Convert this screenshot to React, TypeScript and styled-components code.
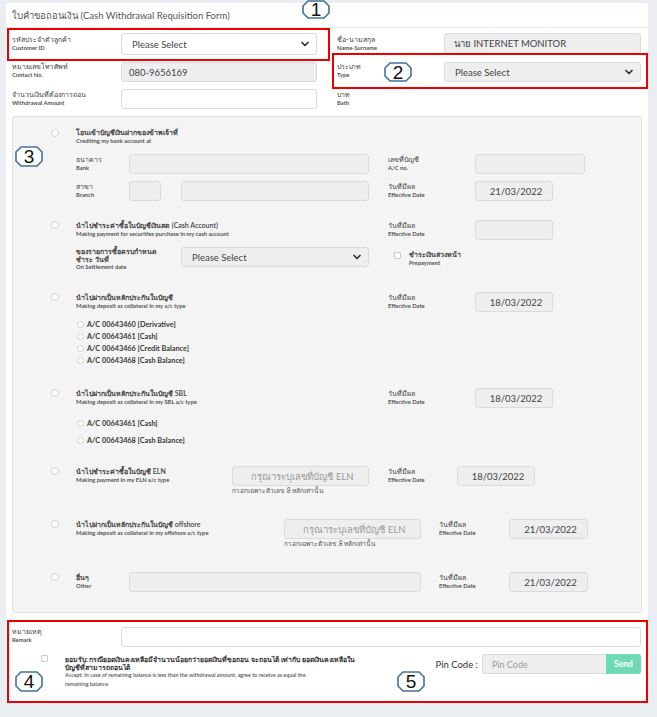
import React from 'react';
import styled, { createGlobalStyle } from 'styled-components';
import { ChevronDown } from 'lucide-react';

// Global page styles
const GlobalStyle = createGlobalStyle`
  html, body {
    margin: 0;
    padding: 0;
    background: #eaedf1;
  }
  body {
    font-family: "Lato", "Noto Sans", sans-serif;
    color: #444;
  }
  * {
    box-sizing: border-box;
  }
`;

const Page = styled.div`
  position: relative;
  width: 657px;
  height: 717px;
  padding: 3px 9px 0 6px;
  overflow: hidden;
`;

const Card = styled.div`
  background: #fff;
  border-radius: 3px;
`;

const CardHeader = styled.div`
  height: 25px;
  padding: 0 6px;
  display: flex;
  align-items: center;
  border-bottom: 1px solid #eceef1;
  font-size: 9.5px;
  color: #555;
`;

// Top customer info grid
const TopGrid = styled.div`
  display: grid;
  grid-template-columns: 109px 196px 20px 107px 197px;
  grid-auto-rows: auto;
  row-gap: 7px;
  padding: 5px 0 0 6px;
  align-items: start;
`;

const Lbl = styled.div<{ $w?: number; $pt?: number }>`
  width: ${p => (p.$w ? `${p.$w}px` : 'auto')};
  flex: none;
  padding-top: ${p => p.$pt ?? 1}px;
`;

const Th = styled.div<{ $bold?: boolean; $lh?: number }>`
  font-size: 7px;
  line-height: ${p => p.$lh ?? 9}px;
  color: #444;
  font-weight: ${p => (p.$bold ? 600 : 400)};
  white-space: nowrap;
`;

const En = styled.div`
  font-size: 5.8px;
  line-height: 8px;
  color: #555;
  font-weight: 700;
  white-space: nowrap;
`;

const Field = styled.div<{ $w?: number; $h?: number; $gray?: boolean; $center?: boolean; $pl?: number }>`
  width: ${p => (p.$w ? `${p.$w}px` : '100%')};
  height: ${p => p.$h ?? 20}px;
  flex: none;
  border: 1px solid #d9dbde;
  border-radius: 3px;
  background: ${p => (p.$gray ? '#eeeeee' : '#fff')};
  display: flex;
  align-items: center;
  justify-content: ${p => (p.$center ? 'center' : 'space-between')};
  padding: 0 5px 0 ${p => p.$pl ?? 9}px;
  font-size: 9.5px;
  color: #444;
  white-space: nowrap;
`;

const Placeholder = styled.span`
  color: #9a9a9a;
  font-size: 9.5px;
`;

const Chevron = styled(ChevronDown)`
  flex: none;
  color: #333;
`;

// Gray option panel
const Panel = styled.div`
  margin: 7px 6px 0 6px;
  background: #f4f4f4;
  border: 1px solid #e3e3e3;
  border-radius: 3px;
  padding: 11px 0 20px 0;
`;

const Block = styled.div<{ $mt?: number }>`
  display: flex;
  margin-top: ${p => p.$mt ?? 0}px;
`;

const RadioCell = styled.div`
  width: 63px;
  flex: none;
  padding: 1px 0 0 38px;
`;

const Radio = styled.span<{ $size?: number }>`
  display: block;
  flex: none;
  width: ${p => p.$size ?? 8}px;
  height: ${p => p.$size ?? 8}px;
  border-radius: 50%;
  border: 1px solid #d3d3d3;
  background: #fff;
`;

const Body = styled.div`
  flex: 1;
  display: flex;
  flex-direction: column;
`;

const Row = styled.div<{ $mt?: number; $h?: number }>`
  display: flex;
  align-items: flex-start;
  margin-top: ${p => p.$mt ?? 0}px;
  min-height: ${p => p.$h ?? 0}px;
`;

const Gap = styled.div<{ $w: number }>`
  width: ${p => p.$w}px;
  flex: none;
`;

const SubList = styled.div<{ $mt: number; $gap: number }>`
  display: flex;
  flex-direction: column;
  gap: ${p => p.$gap}px;
  margin-top: ${p => p.$mt}px;
  margin-left: 1px;
`;

const SubItem = styled.div`
  display: flex;
  align-items: center;
  gap: 3px;
  height: 12px;
  font-size: 7.3px;
  font-weight: 700;
  color: #3a3a3a;
`;

const FieldStack = styled.div`
  display: flex;
  flex-direction: column;
`;

const Hint = styled.div`
  font-size: 6.6px;
  line-height: 9px;
  color: #555;
  white-space: nowrap;
`;

const Check = styled.span<{ $mt?: number }>`
  display: block;
  flex: none;
  width: 7px;
  height: 7px;
  margin-top: ${p => p.$mt ?? 0}px;
  border: 1px solid #c9c9c9;
  border-radius: 1px;
  background: #fff;
`;

// Remark / accept section (boxed in red)
const RemarkSection = styled.div`
  margin: 7px 0 0 1px;
  height: 83px;
  border: 2px solid #ee0000;
  padding: 5px 5px 0 3px;
  display: flex;
  flex-direction: column;
  gap: 7px;
`;

const RemarkRow = styled.div`
  display: flex;
  align-items: flex-start;
`;

const AcceptText = styled.div`
  width: 305px;
  flex: none;
  padding-top: 1px;
`;

const AcceptTh = styled.div`
  font-size: 6.9px;
  line-height: 8px;
  color: #333;
  font-weight: 600;
  white-space: nowrap;
`;

const AcceptEn = styled.div`
  font-size: 5.4px;
  line-height: 9px;
  color: #555;
  font-weight: 600;
  white-space: nowrap;
`;

const PinGroup = styled.div`
  margin-left: auto;
  display: flex;
  align-items: center;
`;

const PinLabel = styled.span`
  font-size: 9.5px;
  color: #333;
  margin-right: 4px;
`;

const PinInput = styled.div`
  width: 124px;
  height: 20px;
  background: #eeeeee;
  border: 1px solid #d9dbde;
  border-right: none;
  border-radius: 3px 0 0 3px;
  display: flex;
  align-items: center;
  padding-left: 9px;
  font-size: 9px;
  color: #9a9a9a;
`;

const SendButton = styled.button`
  width: 35px;
  height: 20px;
  border: none;
  border-radius: 0 3px 3px 0;
  background: #6fd9b5;
  color: #fff;
  font-family: inherit;
  font-size: 8.5px;
  font-weight: 700;
  padding: 0;
`;

// Annotation overlays
const RedBox = styled.div<{ $x: number; $y: number; $w: number; $h: number }>`
  position: absolute;
  left: ${p => p.$x}px;
  top: ${p => p.$y}px;
  width: ${p => p.$w}px;
  height: ${p => p.$h}px;
  border: 2px solid #ee0000;
  pointer-events: none;
`;

const CalloutBox = styled.div<{ $x: number; $y: number; $h?: number }>`
  position: absolute;
  left: ${p => p.$x}px;
  top: ${p => p.$y}px;
  width: 28px;
  height: ${p => p.$h ?? 21}px;
  display: flex;
  align-items: center;
  justify-content: center;
  font-family: "Liberation Sans", Arial, sans-serif;
  font-size: 19px;
  line-height: 1;
  color: #111;

  svg {
    position: absolute;
    inset: 0;
  }
  span {
    position: relative;
  }
`;

const Callout: React.FC<{ n: number; x: number; y: number; h?: number }> = ({ n, x, y, h = 21 }) => (
  <CalloutBox $x={x} $y={y} $h={h}>
    <svg width="28" height={h} viewBox={`0 0 28 ${h}`}>
      <polygon
        points={`6,1 22,1 27,6 27,${h - 6} 22,${h - 1} 6,${h - 1} 1,${h - 6} 1,6`}
        fill="#fff"
        stroke="#41719c"
        strokeWidth="1.6"
      />
    </svg>
    <span>{n}</span>
  </CalloutBox>
);

const TwoLine: React.FC<{ th: string; en: string; w?: number; pt?: number; bold?: boolean }> = ({ th, en, w, pt, bold }) => (
  <Lbl $w={w} $pt={pt}>
    <Th $bold={bold}>{th}</Th>
    <En>{en}</En>
  </Lbl>
);

const DateBox: React.FC<{ value?: string; w?: number }> = ({ value, w = 78 }) => (
  <Field $w={w} $gray $center>
    {value}
  </Field>
);

const App: React.FC = () => {
  return (
    <Page>
      <GlobalStyle />
      <Card>
        <CardHeader>ใบคำขอถอนเงิน (Cash Withdrawal Requisition Form)</CardHeader>

        <TopGrid>
          <TwoLine th="รหัสประจำตัวลูกค้า" en="Customer ID" pt={2} />
          <Field $h={22} $pl={10}>
            Please Select
            <Chevron size={12} strokeWidth={3.5} />
          </Field>
          <div />
          <TwoLine th="ชื่อ-นามสกุล" en="Name-Surname" pt={2} />
          <Field $gray $h={21}>นาย INTERNET MONITOR</Field>

          <TwoLine th="หมายเลขโทรศัพท์" en="Contact No." pt={0} />
          <Field $gray $pl={7}>080-9656169</Field>
          <div />
          <TwoLine th="ประเภท" en="Type" pt={0} />
          <Field $gray $pl={10}>
            Please Select
            <Chevron size={12} strokeWidth={3.5} />
          </Field>

          <TwoLine th="จำนวนเงินที่ต้องการถอน" en="Withdrawal Amount" />
          <Field />
          <div />
          <TwoLine th="บาท" en="Bath" />
          <div />
        </TopGrid>

        <Panel>
          {/* Crediting bank account */}
          <Block>
            <RadioCell><Radio /></RadioCell>
            <Body>
              <Row $h={20}>
                <TwoLine th="โอนเข้าบัญชีเงินฝากของข้าพเจ้าที่" en="Crediting my bank account at" pt={0} bold />
              </Row>
              <Row $mt={6}>
                <TwoLine th="ธนาคาร" en="Bank" w={53} />
                <Field $w={240} $gray />
                <Gap $w={19} />
                <TwoLine th="เลขที่บัญชี" en="A/C no." w={87} />
                <Field $w={110} $gray />
              </Row>
              <Row $mt={7}>
                <TwoLine th="สาขา" en="Branch" w={53} />
                <Field $w={32} $gray />
                <Gap $w={20} />
                <Field $w={188} $gray />
                <Gap $w={19} />
                <TwoLine th="วันที่มีผล" en="Effective Date" w={87} />
                <DateBox value="21/03/2022" />
              </Row>
            </Body>
          </Block>

          {/* Cash account payment */}
          <Block $mt={19}>
            <RadioCell><Radio /></RadioCell>
            <Body>
              <Row>
                <TwoLine th="นำไปชำระค่าซื้อในบัญชีเงินสด (Cash Account)" en="Making payment for securities purchase in my cash account" w={312} bold />
                <TwoLine th="วันที่มีผล" en="Effective Date" w={87} />
                <DateBox />
              </Row>
              <Row $mt={7} $h={24}>
                <Lbl $w={105} $pt={0}>
                  <Th $bold $lh={8}>ของรายการซื้อครบกำหนด</Th>
                  <Th $bold $lh={8}>ชำระ วันที่</Th>
                  <En>On Settlement date</En>
                </Lbl>
                <Field $w={188} $gray $pl={10}>
                  Please Select
                  <Chevron size={12} strokeWidth={3.5} />
                </Field>
                <Gap $w={25} />
                <Check $mt={5} />
                <Gap $w={8} />
                <TwoLine th="ชำระเงินล่วงหน้า" en="Prepayment" pt={3} bold />
              </Row>
            </Body>
          </Block>

          {/* Collateral in a/c */}
          <Block $mt={21}>
            <RadioCell><Radio /></RadioCell>
            <Body>
              <Row>
                <TwoLine th="นำไปฝากเป็นหลักประกันในบัญชี" en="Making deposit as collateral in my a/c type" w={312} bold />
                <TwoLine th="วันที่มีผล" en="Effective Date" w={87} />
                <DateBox value="18/03/2022" />
              </Row>
              <SubList $mt={6} $gap={0}>
                <SubItem><Radio $size={7} />A/C 00643460 [Derivative]</SubItem>
                <SubItem><Radio $size={7} />A/C 00643461 [Cash]</SubItem>
                <SubItem><Radio $size={7} />A/C 00643466 [Credit Balance]</SubItem>
                <SubItem><Radio $size={7} />A/C 00643468 [Cash Balance]</SubItem>
              </SubList>
            </Body>
          </Block>

          {/* Collateral in SBL */}
          <Block $mt={22}>
            <RadioCell><Radio /></RadioCell>
            <Body>
              <Row>
                <TwoLine th="นำไปฝากเป็นหลักประกันในบัญชี SBL" en="Making deposit as collateral in my SBL a/c type" w={312} bold />
                <TwoLine th="วันที่มีผล" en="Effective Date" w={87} />
                <DateBox value="18/03/2022" />
              </Row>
              <SubList $mt={9} $gap={5}>
                <SubItem><Radio $size={7} />A/C 00643461 [Cash]</SubItem>
                <SubItem><Radio $size={7} />A/C 00643468 [Cash Balance]</SubItem>
              </SubList>
            </Body>
          </Block>

          {/* ELN */}
          <Block $mt={20}>
            <RadioCell><Radio /></RadioCell>
            <Body>
              <Row>
                <TwoLine th="นำไปชำระค่าซื้อในบัญชี ELN" en="Making payment in my ELN a/c type" w={156} bold />
                <FieldStack>
                  <Field $w={137} $gray $center><Placeholder>กรุณาระบุเลขที่บัญชี ELN</Placeholder></Field>
                  <Hint>กรอกเฉพาะตัวเลข 8 หลักเท่านั้น</Hint>
                </FieldStack>
                <Gap $w={19} />
                <TwoLine th="วันที่มีผล" en="Effective Date" w={69} />
                <DateBox value="18/03/2022" />
              </Row>
            </Body>
          </Block>

          {/* Offshore */}
          <Block $mt={24}>
            <RadioCell><Radio /></RadioCell>
            <Body>
              <Row>
                <TwoLine th="นำไปฝากเป็นหลักประกันในบัญชี offshore" en="Making deposit as collateral in my offshore a/c type" w={208} bold />
                <FieldStack>
                  <Field $w={137} $gray $center><Placeholder>กรุณาระบุเลขที่บัญชี ELN</Placeholder></Field>
                  <Hint>กรอกเฉพาะตัวเลข 8 หลักเท่านั้น</Hint>
                </FieldStack>
                <Gap $w={18} />
                <TwoLine th="วันที่มีผล" en="Effective Date" w={70} />
                <DateBox value="21/03/2022" w={79} />
              </Row>
            </Body>
          </Block>

          {/* Other */}
          <Block $mt={24}>
            <RadioCell><Radio /></RadioCell>
            <Body>
              <Row>
                <TwoLine th="อื่นๆ" en="Other" w={53} bold />
                <Field $w={292} $gray />
                <Gap $w={18} />
                <TwoLine th="วันที่มีผล" en="Effective Date" w={70} />
                <DateBox value="21/03/2022" w={79} />
              </Row>
            </Body>
          </Block>
        </Panel>

        <RemarkSection>
          <RemarkRow>
            <TwoLine th="หมายเหตุ" en="Remark" w={109} pt={0} />
            <Field $w={520} />
          </RemarkRow>
          <RemarkRow>
            <Gap $w={29} />
            <Check $mt={1} />
            <Gap $w={17} />
            <AcceptText>
              <AcceptTh>ยอมรับ: กรณียอดเงินคงเหลือมีจำนวนน้อยกว่ายอดเงินที่ขอถอน จะถอนได้ เท่ากับ ยอดเงินคงเหลือใน</AcceptTh>
              <AcceptTh>บัญชีที่สามารถถอนได้</AcceptTh>
              <AcceptEn>Accept: In case of remaining balance is less than the withdrawal amount, agree to receive as equal the</AcceptEn>
              <AcceptEn>remaining balance</AcceptEn>
            </AcceptText>
            <PinGroup>
              <PinLabel>Pin Code :</PinLabel>
              <PinInput>Pin Code</PinInput>
              <SendButton>Send</SendButton>
            </PinGroup>
          </RemarkRow>
        </RemarkSection>
      </Card>

      <RedBox $x={7} $y={28} $w={323} $h={33} />
      <RedBox $x={332} $y={53} $w={316} $h={36} />

      <Callout n={1} x={302} y={0} h={19} />
      <Callout n={2} x={384} y={62} h={20} />
      <Callout n={3} x={15} y={146} />
      <Callout n={4} x={15} y={671} />
      <Callout n={5} x={397} y={671} />
    </Page>
  );
};

export default App;
